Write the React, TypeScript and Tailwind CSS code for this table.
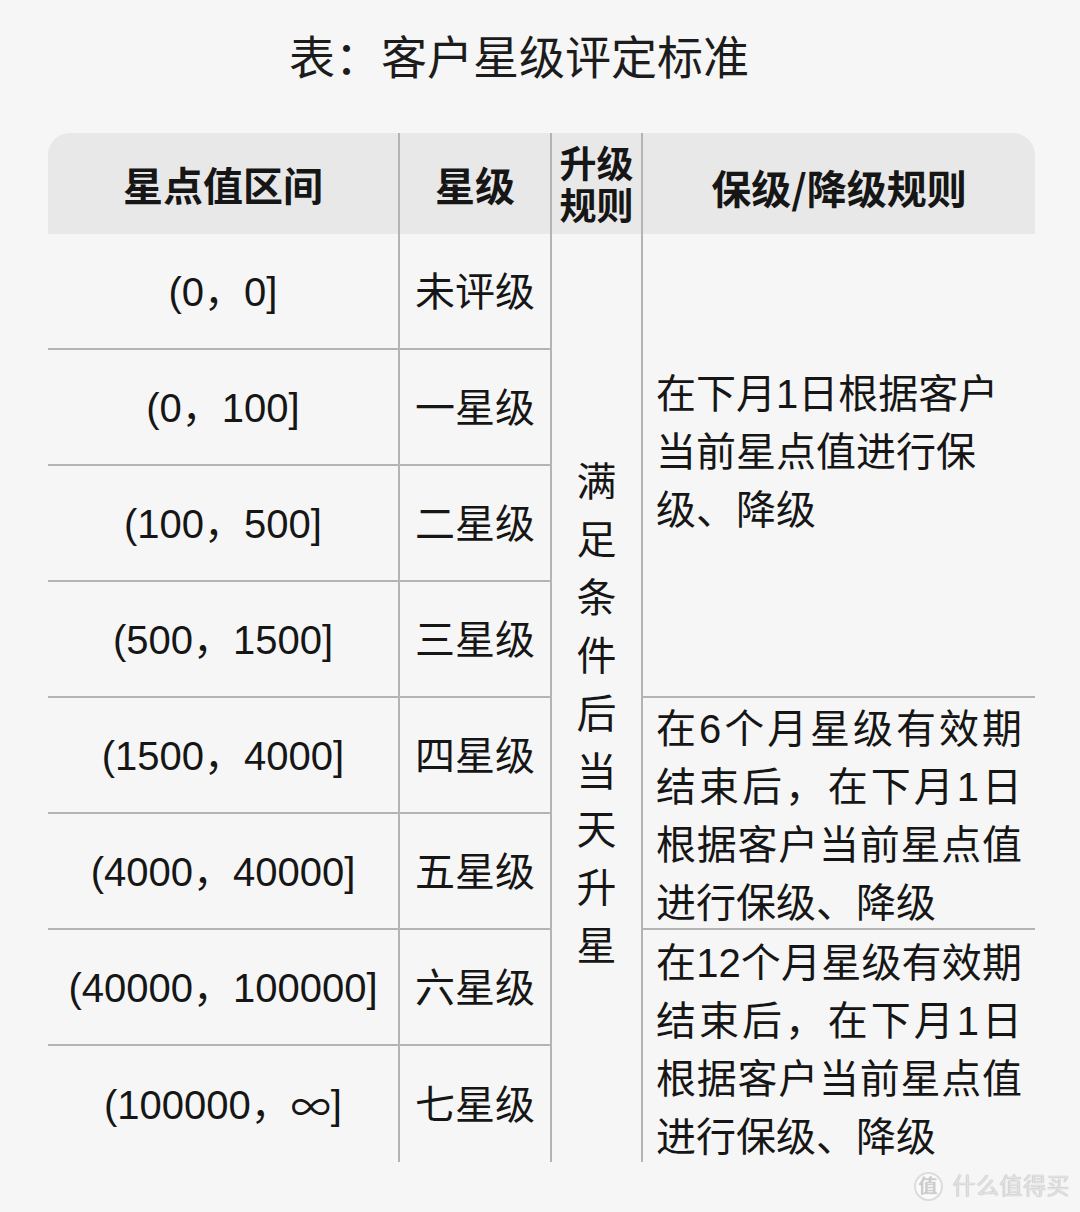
import React from "react";

const rows = [
  { range: "(0，0]", level: "未评级" },
  { range: "(0，100]", level: "一星级" },
  { range: "(100，500]", level: "二星级" },
  { range: "(500，1500]", level: "三星级" },
  { range: "(1500，4000]", level: "四星级" },
  { range: "(4000，40000]", level: "五星级" },
  { range: "(40000，100000]", level: "六星级" },
  { range: "(100000，∞]", level: "七星级" },
];

const rowStarts = [
  "row-start-2",
  "row-start-3",
  "row-start-4",
  "row-start-5",
  "row-start-6",
  "row-start-7",
  "row-start-8",
  "row-start-9",
];

const line = "border-[#b4b4b4]";
const cjk = "font-['Noto_Sans_CJK_SC',sans-serif]";

// ∞ in Liberation Sans is too small, take it from the CJK face
function Range({ text }: { text: string }) {
  if (!text.includes("∞")) return <>{text}</>;
  const [a, b] = text.split("∞");
  return (
    <>
      {a}
      <span className={cjk}>∞</span>
      {b}
    </>
  );
}

function RuleText({ lines, justify }: { lines: string[]; justify: number }) {
  return (
    <div className="w-[366px] text-[40px] leading-[58px]">
      {lines.map((t, i) => (
        <div
          key={i}
          className={
            i < justify
              ? "whitespace-nowrap text-justify [text-align-last:justify]"
              : "whitespace-nowrap"
          }
        >
          {t}
        </div>
      ))}
    </div>
  );
}

export default function App() {
  return (
    <div
      className="relative h-[1212px] w-[1080px] bg-[#f6f6f6] text-[#161616]"
      style={{ fontFamily: '"Liberation Sans", "Noto Sans CJK SC", sans-serif' }}
    >
      <div className="flex h-[116px] items-center justify-center pr-[42px] text-[46px] leading-none text-[#1c1c1c]">
        表：客户星级评定标准
      </div>

      <div className="ml-[48px] mt-[17px] grid grid-cols-[350px_152px_91px_394px] grid-rows-[101px_repeat(8,116px)]">
        {/* header */}
        <div className="col-start-1 row-start-1 flex items-center justify-center rounded-tl-[22px] bg-[#e8e8e8] pt-[6px] text-[40px] font-bold">
          星点值区间
        </div>
        <div className={`col-start-2 row-start-1 flex items-center justify-center border-l-2 ${line} bg-[#e8e8e8] pt-[6px] text-[40px] font-bold`}>
          星级
        </div>
        <div className={`col-start-3 row-start-1 flex flex-col items-center justify-center border-l-2 ${line} bg-[#e8e8e8] pt-[6px] text-[37px] leading-[42px] font-bold`}>
          <span className="h-[42px]">升级</span>
          <span className="h-[42px]">规则</span>
        </div>
        <div className={`col-start-4 row-start-1 flex items-center justify-center rounded-tr-[22px] border-l-2 ${line} bg-[#e8e8e8] pt-[6px] text-[40px] font-bold ${cjk}`}>
          保级/降级规则
        </div>

        {/* body: ranges and levels */}
        {rows.map((r, i) => (
          <React.Fragment key={r.range}>
            <div
              className={`col-start-1 ${rowStarts[i]} flex items-center justify-center whitespace-nowrap pt-[2px] text-[40px] ${
                i < rows.length - 1 ? `border-b-2 ${line}` : ""
              }`}
            >
              <Range text={r.range} />
            </div>
            <div
              className={`col-start-2 ${rowStarts[i]} flex items-center justify-center border-l-2 ${line} pt-[2px] text-[40px] ${
                i < rows.length - 1 ? "border-b-2" : ""
              }`}
            >
              {r.level}
            </div>
          </React.Fragment>
        ))}

        {/* upgrade rule, vertical */}
        <div className={`col-start-3 row-start-2 row-end-10 flex flex-col items-center justify-center border-l-2 ${line} pt-[32px] text-[40px] leading-[58px]`}>
          {"满足条件后当天升星".split("").map((c, i) => (
            <span key={i}>{c}</span>
          ))}
        </div>

        {/* keep / downgrade rules */}
        <div className={`col-start-4 row-start-2 row-end-6 flex items-center border-l-2 border-b-2 ${line} pl-[13px] pb-[26px]`}>
          <RuleText lines={["在下月1日根据客户", "当前星点值进行保", "级、降级"]} justify={0} />
        </div>
        <div className={`col-start-4 row-start-6 row-end-8 flex items-start border-l-2 border-b-2 ${line} pl-[13px] pt-[2px]`}>
          <RuleText
            lines={["在6个月星级有效期", "结束后，在下月1日", "根据客户当前星点值", "进行保级、降级"]}
            justify={3}
          />
        </div>
        <div className={`col-start-4 row-start-8 row-end-10 flex items-start border-l-2 ${line} pl-[13px] pt-[4px]`}>
          <RuleText
            lines={["在12个月星级有效期", "结束后，在下月1日", "根据客户当前星点值", "进行保级、降级"]}
            justify={3}
          />
        </div>
      </div>

      {/* watermark */}
      <div className="absolute bottom-[11px] right-[10px] flex items-center gap-[10px] text-[#e2e2e2] [text-shadow:0_0_1px_#9a9a9a]">
        <div className="flex h-[29px] w-[29px] items-center justify-center rounded-full border-2 border-[#dcdcdc] bg-white/60 text-[19px] leading-none text-[#cfcfcf]">
          值
        </div>
        <span className="text-[23px] leading-none tracking-[0.5px]">什么值得买</span>
      </div>
    </div>
  );
}
